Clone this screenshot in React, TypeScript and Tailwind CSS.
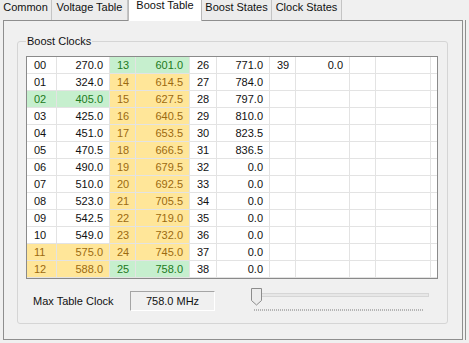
import React from "react";

type Tone = "none" | "good" | "warn";

const values: string[][] = [
  ["270.0", "324.0", "405.0", "425.0", "451.0", "470.5", "490.0", "510.0", "523.0", "542.5", "549.0", "575.0", "588.0"],
  ["601.0", "614.5", "627.5", "640.5", "653.5", "666.5", "679.5", "692.5", "705.5", "719.0", "732.0", "745.0", "758.0"],
  ["771.0", "784.0", "797.0", "810.0", "823.5", "836.5", "0.0", "0.0", "0.0", "0.0", "0.0", "0.0", "0.0"],
  ["0.0"],
];

const tabs = [
  { label: "Common", w: "w-[52px]" },
  { label: "Voltage Table", w: "w-[76px]" },
  { label: "Boost Table", w: "w-[74px]", active: true },
  { label: "Boost States", w: "w-[70px]" },
  { label: "Clock States", w: "w-[70px]" },
];

const toneOf = (pair: number, row: number): Tone => {
  if (pair === 0) {
    if (row === 2) return "good";
    if (row >= 11) return "warn";
  }
  if (pair === 1) {
    if (row === 0 || row === 12) return "good";
    return "warn";
  }
  return "none";
};

const toneClass: Record<Tone, string> = {
  none: "bg-white text-[#111]",
  good: "bg-[#c6efce] text-[#217a21]",
  warn: "bg-[#ffe699] text-[#9c6a10]",
};

const pad = (n: number) => (n < 10 ? "0" + n : String(n));

const BoostGrid: React.FC = () => {
  const cells: React.ReactNode[] = [];
  for (let row = 0; row < 13; row++) {
    for (let pair = 0; pair < 5; pair++) {
      const v = values[pair]?.[row];
      const t = v ? toneOf(pair, row) : "none";
      cells.push(
        <div
          key={`i${row}-${pair}`}
          className={`h-[17px] border-r border-b border-[#e3e3e3] pl-[7px] leading-[16px] ${toneClass[t]}`}
        >
          {v ? pad(pair * 13 + row) : ""}
        </div>
      );
      cells.push(
        <div
          key={`v${row}-${pair}`}
          className={`h-[17px] border-r border-b border-[#e3e3e3] pr-[6px] text-right leading-[16px] ${toneClass[t]}`}
        >
          {v ?? ""}
        </div>
      );
    }
    cells.push(<div key={`f${row}`} className="h-[17px] border-b border-[#e3e3e3] bg-white" />);
  }
  return (
    <div className="grid w-[412px] grid-cols-[30px_53px_26px_54px_27px_53px_26px_54px_26px_55px_1fr] overflow-hidden border border-[#8a8a8a] bg-white">
      {cells}
    </div>
  );
};

const Slider: React.FC = () => (
  <svg width="180" height="26" viewBox="0 0 180 26" className="-mt-[3px] ml-[35px] block">
    <rect x="2.5" y="5.5" width="176" height="3" fill="#e7e7e7" stroke="#d6d6d6" />
    <line x1="4" y1="22" x2="174" y2="22" stroke="#b4b4b4" strokeWidth="2" strokeDasharray="1 1" />
    <path d="M1.5 0.5 H11.5 V12.5 L6.5 17 L1.5 12.5 Z" fill="#ececec" stroke="#8c8c8c" />
  </svg>
);

export default function App() {
  return (
    <div className="h-[343px] w-[469px] overflow-hidden bg-[#f0f0f0] font-['Liberation_Sans',Arial,sans-serif] text-[11px] text-[#111]">
      <div className="relative z-10 flex h-[20px] items-end">
        {tabs.map((t) =>
          t.active ? (
            <div
              key={t.label}
              className={`${t.w} -mb-[1px] h-[21px] border-x border-[#b9b9b9] bg-white text-center leading-[11px]`}
            >
              {t.label}
            </div>
          ) : (
            <div
              key={t.label}
              className={`${t.w} h-[20px] border-r border-[#c4c4c4] bg-[#ececec] pt-[1px] text-center leading-[13px]`}
            >
              {t.label}
            </div>
          )
        )}
      </div>
      <div className="flex">
        <div className="ml-[3px] h-[320px] w-[460px] border border-[#8e8e8e] bg-[#f0f0f0] pl-[13px] pr-[14px]">
          <fieldset className="mt-[13px] h-[290px] rounded-[3px] border border-[#d5d5d5] px-[8px] pt-[8px]">
            <legend className="px-[1px] leading-[14px]">Boost Clocks</legend>
            <BoostGrid />
            <div className="mt-[12px] flex items-start">
              <div className="ml-[7px] w-[97px] leading-[20px]">Max Table Clock</div>
              <div className="h-[20px] w-[85px] border border-[#a5a5a5] border-r-white border-b-white text-center leading-[18px]">
                758.0 MHz
              </div>
              <Slider />
            </div>
          </fieldset>
        </div>
        <div className="ml-[2px] h-[320px] w-px bg-[#8e8e8e]" />
      </div>
    </div>
  );
}
